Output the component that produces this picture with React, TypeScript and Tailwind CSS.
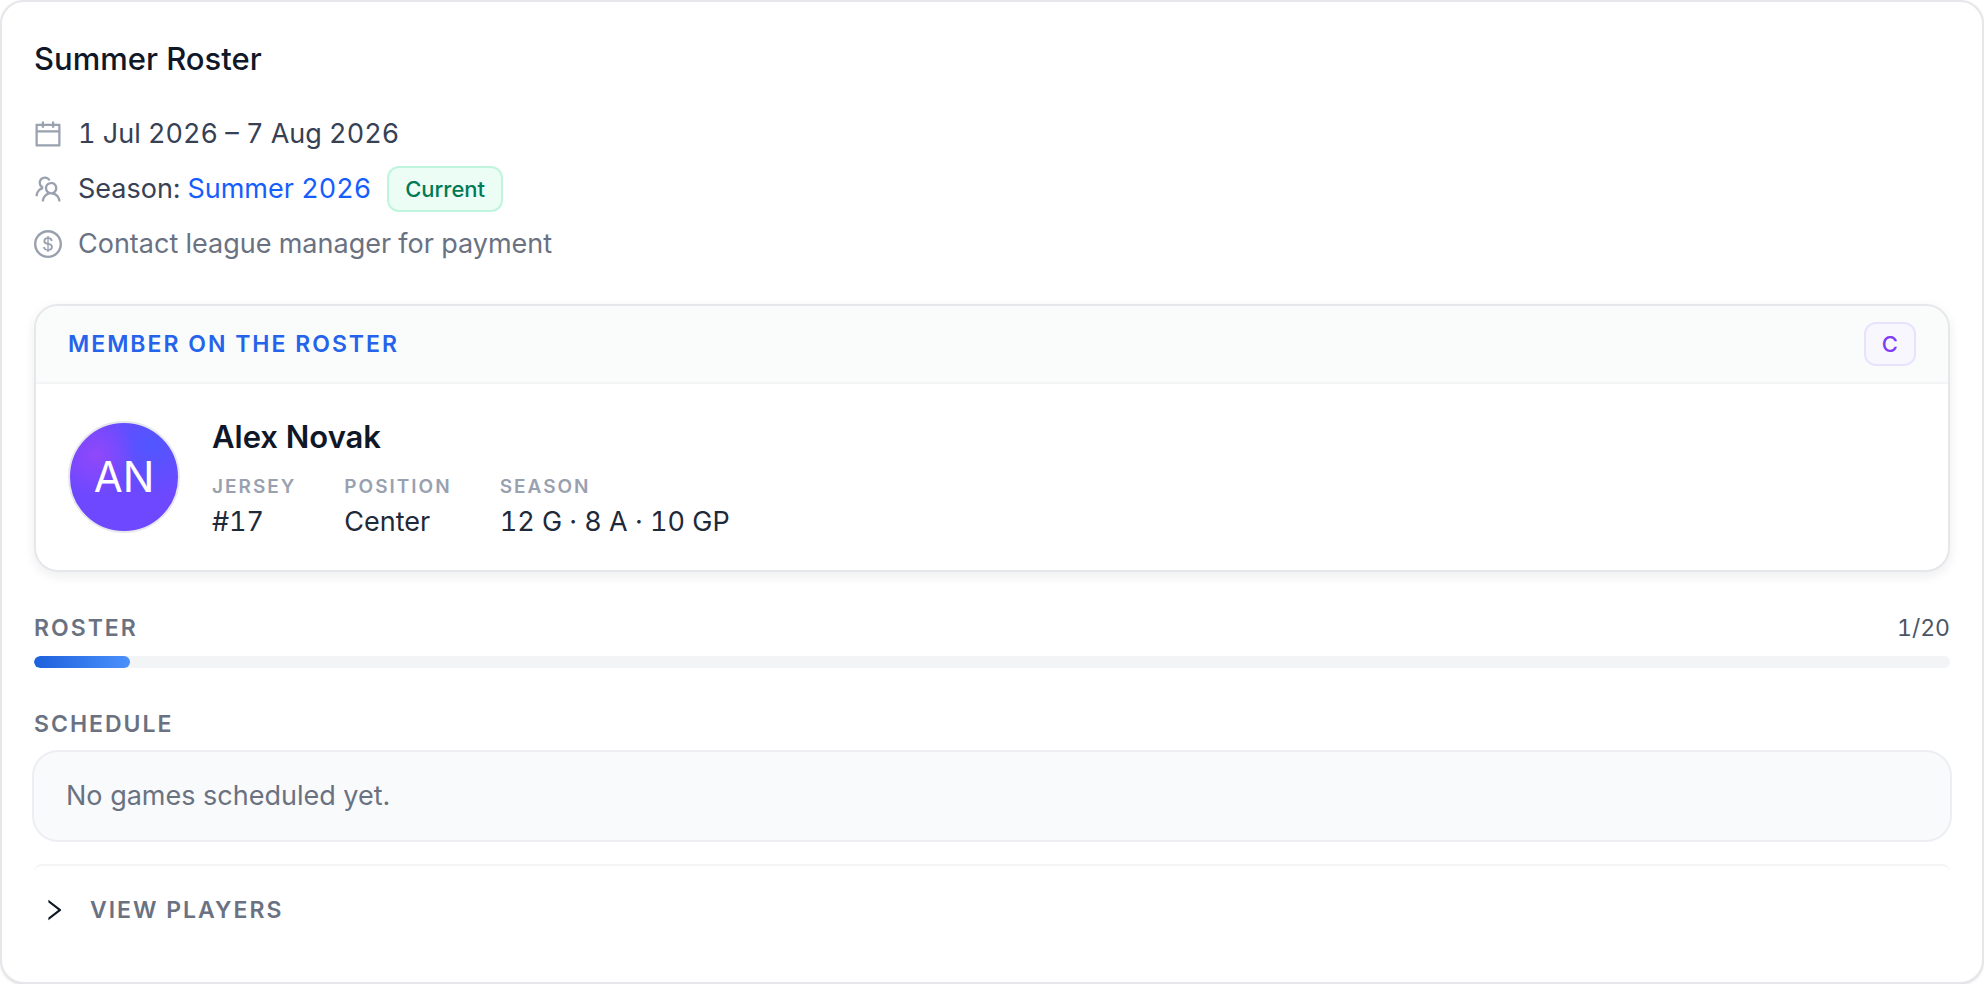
import type { ReactNode } from "react";
import {
  AiOutlineCalendar,
  AiOutlineDollar,
  AiOutlineRight,
  AiOutlineTeam,
} from "react-icons/ai";

const ICON_BOX = "64 64 896 896";

function InfoRow({ icon, children }: { icon: ReactNode; children: ReactNode }) {
  return (
    <div className="flex items-center gap-4">
      <span className="text-[#99a1af]">{icon}</span>
      <div className="flex items-center gap-4 text-[27px] tabular-nums">{children}</div>
    </div>
  );
}

function Stat({ label, value }: { label: string; value: string }) {
  return (
    <div>
      <dt className="text-[19px] leading-[30px] font-semibold tracking-[2px] text-[#99a1af] uppercase">
        {label}
      </dt>
      <dd className="mt-1 text-[27px] leading-[32px] text-[#1e2939] tabular-nums">{value}</dd>
    </div>
  );
}

function SectionLabel({ children }: { children: ReactNode }) {
  return (
    <h3 className="text-[23px] leading-[32px] font-semibold tracking-[2px] text-[#6a7282] uppercase">
      {children}
    </h3>
  );
}

export default function App() {
  const filled = 1;
  const capacity = 20;

  return (
    <article className="rounded-[24px] border-2 border-[#e5e7eb] bg-white p-8 font-['Inter',sans-serif] text-[28px] leading-[40px] shadow-sm">
      <h2 className="text-[31px] leading-[50px] font-medium text-[#101828]">
        Summer Roster
      </h2>

      <div className="mt-[30px] flex flex-col gap-3">
        <InfoRow icon={<AiOutlineCalendar viewBox={ICON_BOX} className="size-7" />}>
          <span className="text-[#364153]">1 Jul 2026 – 7 Aug 2026</span>
        </InfoRow>
        <InfoRow icon={<AiOutlineTeam viewBox={ICON_BOX} className="size-7" />}>
          <span className="text-[#364153]">
            Season:{" "}
            <a href="#season" className="text-[#155dfc]">
              Summer 2026
            </a>
          </span>
          <span className="rounded-[12px] border-2 border-[#bff5dc] bg-[#ecfdf5] px-4 py-[5px] text-[22px] leading-[32px] font-medium text-[#007a55]">
            Current
          </span>
        </InfoRow>
        <InfoRow icon={<AiOutlineDollar viewBox={ICON_BOX} className="size-7" />}>
          <span className="text-[#6a7282]">Contact league manager for payment</span>
        </InfoRow>
      </div>

      <section className="mt-10 overflow-hidden rounded-[24px] border-2 border-[#e5e7eb] bg-white shadow-[0_4px_12px_rgba(16,24,40,0.08)]">
        <header className="flex items-center justify-between border-b-2 border-[#f3f4f6] bg-[#fafcfb] px-8 py-4">
          <h3 className="text-[23px] leading-[32px] font-semibold tracking-[2px] text-[#2563eb] uppercase">
            Member on the roster
          </h3>
          <span className="rounded-[12px] border-2 border-[#e9e2ff] bg-[#f9f7fe] px-4 py-1 text-[22px] leading-[32px] font-medium text-[#7f3cf5]">
            C
          </span>
        </header>
        <div className="flex items-center gap-8 p-8">
          <div className="flex size-28 shrink-0 items-center justify-center rounded-full border-2 border-[#e5e7eb] bg-[radial-gradient(circle_at_24%_30%,#9148fa_0%,#9148fa00_36%),radial-gradient(circle_at_75%_20%,#5057ff_0%,#5057ff00_45%),linear-gradient(#6e48ff,#6e48ff)] text-[42px] text-white">
            AN
          </div>
          <div>
            <p className="text-[31px] leading-[42px] font-semibold text-[#101828]">
              Alex Novak
            </p>
            <dl className="mt-3.5 flex gap-12">
              <Stat label="Jersey" value="#17" />
              <Stat label="Position" value="Center" />
              <Stat label="Season" value="12 G · 8 A · 10 GP" />
            </dl>
          </div>
        </div>
      </section>

      <section className="mt-10">
        <div className="flex items-center justify-between">
          <SectionLabel>Roster</SectionLabel>
          <span className="text-[23px] leading-[32px] text-[#4a5565] tabular-nums">
            {filled}/{capacity}
          </span>
        </div>
        <div className="mt-3 h-3 overflow-hidden rounded-full bg-[#f3f4f6]">
          <div
            className="h-full rounded-full bg-linear-to-r from-[#1d60dc] to-[#4b91fb]"
            style={{ width: `${(filled / capacity) * 100}%` }}
          />
        </div>
      </section>

      <section className="mt-10">
        <SectionLabel>Schedule</SectionLabel>
        <p className="mt-3 rounded-[24px] bg-[#f9fafc] px-8 py-6 text-[27px] text-[#6a7282] ring-2 ring-[#edeef2]">
          No games scheduled yet.
        </p>
      </section>

      <div className="mt-6 rounded-lg border-t-2 border-[#f3f4f6] pt-6 pb-5">
        <button type="button" className="flex items-center gap-6 pl-2 text-[#101828]">
          <AiOutlineRight viewBox={ICON_BOX} className="size-6" />
          <span className="text-[23px] leading-[40px] font-semibold tracking-[2px] text-[#6a7282] uppercase">
            View players
          </span>
        </button>
      </div>
    </article>
  );
}
